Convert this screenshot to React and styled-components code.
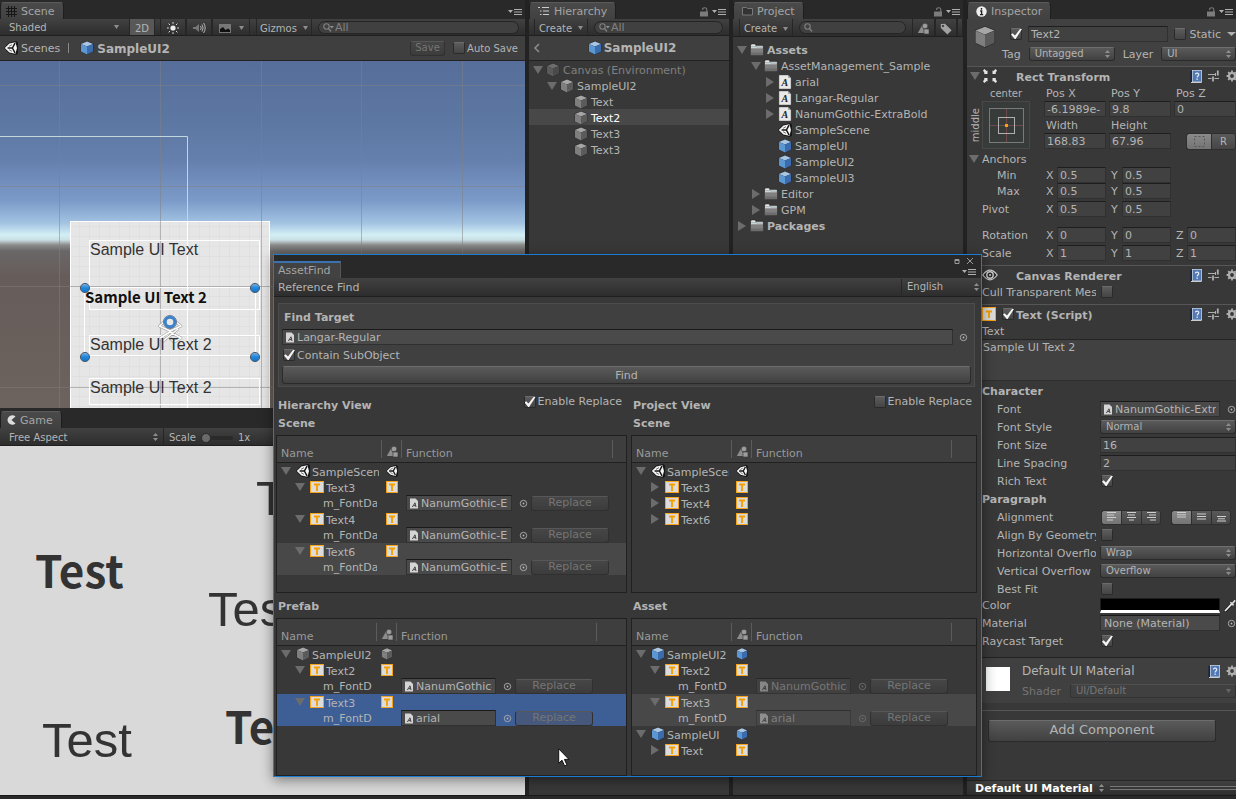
import React from 'react';
import styled, { createGlobalStyle, css } from 'styled-components';

const Global = createGlobalStyle`
  *, *::before, *::after { box-sizing: border-box; }
  body { margin: 0; background: #222; }
  body, button, input, select, textarea {
    font-family: "DejaVu Sans", sans-serif;
    font-size: 11px;
    color: #b4b4b4;
  }
  svg { display: block; flex: none; }
  h2, h3 { margin: 0; font-size: 11px; font-weight: 700; }
`;

/* ---------- icons ---------- */

const Arrow = styled.span`
  flex: none;
  width: 14px;
  display: flex;
  justify-content: center;
  &::before {
    content: '';
    width: ${p => (p.$open ? 10 : 8)}px;
    height: ${p => (p.$open ? 8 : 10)}px;
    background: #6c6c6c;
    clip-path: ${p => (p.$open ? 'polygon(0 0, 100% 0, 50% 100%)' : 'polygon(0 0, 100% 50%, 0 100%)')};
  }
  visibility: ${p => (p.$none ? 'hidden' : 'visible')};
`;

const cubeTones = {
  blue: ['#a9c6e4', '#5b97d2', '#3a6cae'],
  gray: ['#a6a6a6', '#7f7f7f', '#5b5b5b'],
  dim: ['#6d6d6d', '#5a5a5a', '#4a4a4a'],
};
const Cube = ({ tone = 'gray', size = 14 }) => {
  const [a, b, c] = cubeTones[tone];
  return (
    <svg width={size} height={size} viewBox="0 0 14 14">
      <path d="M7 0L13.4 2.6V10.8L7 14L.6 10.8V2.6z" fill="#2b2b2b" />
      <path d="M7 .4L13 2.9L7 5.4L1 2.9z" fill={a} />
      <path d="M1 3.1L7 5.6V13.5L1 10.6z" fill={b} />
      <path d="M13 3.1L7 5.6V13.5L13 10.6z" fill={c} />
    </svg>
  );
};

const UnityLogo = ({ size = 14 }) => (
  <svg width={size} height={size} viewBox="0 0 14 14">
    <path d="M0 7L5 1.8L12 0L14 1.5V12.5L12 14L5 12.2z" fill="#161616" />
    <path d="M.8 7L5.4 2.6L11.4 1.2L13 7L11.4 12.8L5.4 11.4z" fill="#f6f6f6" />
    <path d="M3.6 7H8.4L11 2.2M8.4 7L11 11.8" stroke="#161616" strokeWidth="1.5" fill="none" />
    <path d="M5 5.4L8 3.6M5 8.6L8 10.4" stroke="#161616" strokeWidth=".6" />
  </svg>
);

const Folder = () => (
  <svg width="14" height="14" viewBox="0 0 14 14">
    <path d="M.5 2.5L1.5 1H5L6 2.3H12.5L13.3 3.5V12.5H.5z" fill="#a8a8a8" stroke="#262626" strokeWidth=".6" />
    <path d="M1.5 1.4H5V3.2H1z" fill="#e4e4e4" />
    <path d="M1 4.6H6L7.2 3.9H13" stroke="#c7dde2" fill="none" />
    <path d="M1 5.6H13V12H1z" fill="#808080" />
    <path d="M1 9.5H13V12H1z" fill="#6d6d6d" />
  </svg>
);

const FontFile = () => (
  <svg width="14" height="14" viewBox="0 0 14 14">
    <path d="M1.4 .5H10L12.6 3V13.5H1.4z" fill="#e9e9e9" stroke="#fff" strokeWidth=".5" />
    <path d="M10 .5V3H12.6z" fill="#aaa" />
    <text x="3.4" y="11" fontFamily="Liberation Serif, serif" fontStyle="italic" fontWeight="700" fontSize="10" fill="#222">A</text>
  </svg>
);

const MiniFont = () => (
  <svg width="10" height="11" viewBox="0 0 10 11">
    <path d="M1 .5H6.5L9 3V10.5H1z" fill="#d4d4d4" />
    <path d="M3.4 9L6 4.8L7 9M4.6 7.6H6.6" stroke="#444" strokeWidth="1" fill="none" />
  </svg>
);

const TIcon = ({ w = 14, h = 12 }) => (
  <svg width={w} height={h} viewBox={`0 0 ${w} ${h}`}>
    <rect x=".5" y=".5" width={w - 1} height={h - 1} fill="#dcdcdc" stroke="#f5a21c" />
    <path d={`M${w / 2 - 3} ${h / 2 - 2.5}h6M${w / 2} ${h / 2 - 3}v7`} stroke="#f5a000" strokeWidth="1.9" />
  </svg>
);

const Shapes = () => (
  <svg width="13" height="12" viewBox="0 0 13 12">
    <path d="M5 2.5L8.2 10H.8z" fill="#8c8c8c" />
    <circle cx="8" cy="3" r="2.8" fill="#9c9c9c" stroke="#383838" strokeWidth=".6" />
    <rect x="7" y="6" width="5" height="5" fill="#9c9c9c" stroke="#383838" strokeWidth=".6" />
  </svg>
);

const Tag = () => (
  <svg width="12" height="12" viewBox="0 0 12 12">
    <path d="M.8 1L5 .8L11.6 7.2L7.4 11.4L.8 5z" fill="#a2a2a2" />
    <circle cx="3" cy="3" r="1.1" fill="#333" />
  </svg>
);

const Lock = () => (
  <svg width="9" height="10" viewBox="0 0 9 10">
    <rect x="0" y="4.5" width="8" height="5" fill="#7c7c7c" />
    <path d="M2.6 3V2.4C2.6 .2 6.8 .2 6.8 2.4V5" stroke="#7c7c7c" fill="none" strokeWidth="1.1" />
  </svg>
);

const PaneMenu = () => (
  <svg width="14" height="6" viewBox="0 0 14 6">
    <path d="M0 1H5L2.5 4z" fill="#b0b0b0" />
    <path d="M6 .5H14M6 3H14M6 5.5H14" stroke="#b0b0b0" />
  </svg>
);

const Book = () => (
  <svg width="12" height="13" viewBox="0 0 12 13">
    <path d="M.4 1L2.4 .4V11.4L.4 12.4z" fill="#16243f" />
    <rect x="2.4" y=".5" width="9.2" height="11.4" fill="#5379b5" stroke="#c4d2e6" strokeWidth=".8" />
    <path d="M1 12.5H11.5" stroke="#ccc" />
    <path d="M5.4 4.4C5.6 2.6 9 2.8 8.7 4.8C8.5 6 7.1 6 7.1 7.4M7.1 8.5V9.9" stroke="#e8eef8" strokeWidth="1.2" fill="none" />
  </svg>
);

const Sliders = () => (
  <svg width="12" height="12" viewBox="0 0 12 12" stroke="#aeaeae" fill="none">
    <path d="M0 4.5H7M0 8.5H3.5M6.5 8.5H11" />
    <path d="M5 6.5V11.5M9.8 .5V5.6" strokeWidth="1.8" />
    <path d="M7.5 3V6" />
  </svg>
);

const Gear = () => (
  <svg width="12" height="12" viewBox="0 0 12 12">
    <circle cx="6" cy="6" r="3" fill="none" stroke="#b0b0b0" strokeWidth="2.2" />
    <path d="M6 .6V2.4M6 9.6V11.4M.6 6H2.4M9.6 6H11.4M2.2 2.2L3.4 3.4M8.6 8.6L9.8 9.8M2.2 9.8L3.4 8.6M8.6 3.4L9.8 2.2" stroke="#b0b0b0" strokeWidth="1.8" />
  </svg>
);

const Magnifier = ({ caret }) => (
  <svg width={caret ? 11 : 9} height="9" viewBox={caret ? '0 0 11 9' : '0 0 9 9'}>
    <circle cx="3.5" cy="3.5" r="2.7" fill="none" stroke="#808080" strokeWidth="1.1" />
    <path d="M5.5 5.5L8 8.5" stroke="#808080" strokeWidth="1.3" />
    {caret && <path d="M6.8 3H10.8L8.8 5.4z" fill="#909090" />}
  </svg>
);

const UpDown = () => (
  <svg width="5" height="8" viewBox="0 0 5 8">
    <path d="M0 3L2.5 0L5 3zM0 5L2.5 8L5 5z" fill="#8e8e8e" />
  </svg>
);

const Down = ({ w = 5, color = '#8e8e8e' }) => (
  <svg width={w} height="4" viewBox="0 0 5 4" preserveAspectRatio="none">
    <path d="M0 0H5L2.5 4z" fill={color} />
  </svg>
);

const Picker = ({ faded }) => (
  <svg width="9" height="9" viewBox="0 0 9 9">
    <circle cx="4.5" cy="4.5" r="3.2" fill="none" stroke={faded ? '#6a6a6a' : '#a8a8a8'} />
    <circle cx="4.5" cy="4.5" r=".9" fill={faded ? '#6a6a6a' : '#b8b8b8'} />
  </svg>
);

/* ---------- shared controls ---------- */

const Check = styled.input.attrs({ type: 'checkbox' })`
  appearance: none;
  flex: none;
  width: 12px;
  height: 12px;
  margin: 0;
  border: 1px solid #2a2a2a;
  border-top-color: #6c6c6c;
  border-radius: 2px;
  background: linear-gradient(#5c5c5c, #444);
  display: grid;
  &:checked::before {
    content: '';
    width: 11px;
    height: 10px;
    background: #f4f4f4;
    clip-path: polygon(0 55%, 15% 42%, 36% 66%, 82% 0, 100% 0, 42% 100%, 34% 100%);
  }
`;

const CheckLabel = styled.label`
  display: flex;
  align-items: center;
  gap: 2px;
  white-space: nowrap;
  font-size: ${p => (p.$small ? 10 : 11)}px;
`;

const raised = css`
  border: 1px solid #2b2b2b;
  border-top-color: #6e6e6e;
  border-radius: 3px;
  background: linear-gradient(#5a5a5a, #414141);
`;

const PushButton = styled.button`
  ${raised}
  padding: ${p => (p.$tall ? '0 0 2px' : '1px 0 0')};
  margin-top: ${p => (p.$tall ? 0 : 1)}px;
  width: 100%;
  height: ${p => (p.$tall ? 22 : 18)}px;
  font-size: ${p => (p.$tall ? 13 : 11)}px;
  line-height: 16px;
`;

const MiniButton = styled.button`
  flex: none;
  width: ${p => p.$w}px;
  height: 15px;
  padding: 0;
  border: 1px solid #303030;
  border-top-color: #575757;
  border-radius: 3px;
  background: ${p => (p.$onBlue ? '#46597c' : 'linear-gradient(#464646, #3c3c3c)')};
  color: #757575;
  font-size: ${p => (p.$small ? 10 : 11)}px;
  line-height: 12px;
`;

const SelectBox = styled.span`
  display: grid;
  min-width: 0;
  flex: ${p => (p.$w ? `0 0 ${p.$w}px` : '1 1 0')};
  align-items: center;
  & > select, & > svg { grid-area: 1 / 1; }
  & > svg { justify-self: end; margin-right: 5px; pointer-events: none; }
  & > select {
    appearance: none;
    width: 100%;
    height: ${p => (p.$flat ? 16 : 14)}px;
    padding: ${p => (p.$flat ? '2px 12px 0 9px' : '0 12px 0 5px')};
    font-size: 10px;
    line-height: 12px;
    opacity: 1;
    ${p => (p.$flat ? 'border: 0; border-radius: 0; background: transparent;' : raised)}
    ${p => p.$faded && 'background: #404040; border-color: #333; border-top-color: #505050; color: #777;'}
  }
`;

const Select = ({ label, value, arrow = 'updown', ...rest }) => (
  <SelectBox {...rest}>
    <select aria-label={label} defaultValue={value} disabled={rest.$faded}>
      <option>{value}</option>
    </select>
    {arrow === 'updown' ? <UpDown /> : <Down color={rest.$faded ? '#666' : undefined} />}
  </SelectBox>
);

const Field = styled.input`
  flex: 1 1 0;
  min-width: 0;
  width: 100%;
  height: 16px;
  padding: 0 2px;
  border: 1px solid #303030;
  border-top-color: #1e1e1e;
  background: #414141;
`;

const ObjectBox = styled.span`
  flex: 1 1 0;
  min-width: 0;
  height: 16px;
  display: flex;
  align-items: center;
  gap: 1px;
  padding: 0 2px;
  border: 1px solid #303030;
  border-top-color: #1a1a1a;
  background: #4a4a4a;
  opacity: ${p => (p.$faded ? 0.5 : 1)};
  & > input {
    flex: 1;
    min-width: 0;
    height: 14px;
    border: 0;
    padding: 0 1px;
    background: transparent;
  }
`;

const ObjectInput = ({ label, value, icon = true, faded }) => (
  <ObjectBox $faded={faded}>
    {icon && <MiniFont />}
    <input aria-label={label} defaultValue={value} readOnly />
  </ObjectBox>
);

const PickButton = styled.button`
  flex: none;
  width: ${p => p.$w}px;
  height: 16px;
  padding: 0 0 0 ${p => p.$pad ?? 3}px;
  border: 0;
  background: none;
  display: grid;
  place-items: center;
`;

/* ---------- panes ---------- */

const Desktop = styled.div`
  position: relative;
  min-height: 100vh;
  overflow: hidden;
  display: flex;
  flex-direction: column;
  background: #222;
`;

const Columns = styled.div`
  flex: 1;
  display: grid;
  grid-template-columns: minmax(0, 525fr) minmax(0, 200fr) minmax(0, 230fr) minmax(0, 269fr);
  gap: 4px;
`;

const StatusStrip = styled.footer`
  height: 4px;
  background: #292929;
  border-top: 1px solid #191919;
`;

const Pane = styled.section`
  min-width: 0;
  display: flex;
  flex-direction: column;
  background: #383838;
  overflow: hidden;
  ${p => p.$grow && `flex: ${p.$grow} 1 0;`}
`;

const LeftColumn = styled.div`
  display: flex;
  flex-direction: column;
  min-width: 0;
`;

const TabBar = styled.header`
  flex: none;
  height: ${p => (p.$tall ? 20 : 19)}px;
  display: flex;
  align-items: flex-end;
  justify-content: space-between;
  background: #292929;
`;

const PaneTab = styled.h2`
  height: 17px;
  display: flex;
  align-items: center;
  gap: 4px;
  padding: 0 8px 0 ${p => p.$pad ?? 8}px;
  border: 1px solid #1f1f1f;
  border-top-color: #5a5a5a;
  border-bottom: 0;
  border-radius: 4px 4px 0 0;
  background: linear-gradient(#4a4a4a, #414141);
  font-weight: 400;
  color: #a4a4a4;
`;

const PaneActions = styled.div`
  height: 14px;
  display: flex;
  align-items: center;
  gap: 3px;
  padding-right: 3px;
`;

const Toolbar = styled.div`
  flex: none;
  height: ${p => p.$h || 17}px;
  display: flex;
  align-items: center;
  background: linear-gradient(#414141, #2d2d2d);
  border-bottom: 1px solid #1f1f1f;
  font-size: 10px;
`;

const ToolItem = styled.button`
  height: 100%;
  flex: none;
  width: ${p => p.$w}px;
  margin-left: ${p => p.$ml || 0}px;
  padding: 2px 0 0;
  display: flex;
  align-items: center;
  justify-content: center;
  gap: ${p => p.$gap || 6}px;
  border: 0;
  border-left: 1px solid #262626;
  border-right: 1px solid #262626;
  background: ${p => (p.$on ? '#585858' : 'transparent')};
  font-size: 10px;
`;

const SearchBox = styled.label`
  flex: 1;
  min-width: 0;
  height: 13px;
  margin: 0 6px;
  padding: 0 4px;
  display: flex;
  align-items: center;
  gap: 1px;
  border: 1px solid #242424;
  border-radius: 7px;
  background: #404040;
  & > input {
    min-width: 0;
    flex: 1;
    height: 11px;
    padding: 0;
    border: 0;
    background: transparent;
  }
  & > input::placeholder { color: #808080; opacity: 1; }
`;

const Crumbs = styled.div`
  flex: none;
  height: 25px;
  display: flex;
  align-items: center;
  gap: 3px;
  padding: 0 7px 0 4px;
  background: #3f3f3f;
  border-bottom: 1px solid #222;
  white-space: nowrap;
`;

const CrumbLink = styled.a`
  color: #b4b4b4;
  text-decoration: none;
  font-size: ${p => (p.$current ? 12 : 11)}px;
  line-height: 14px;
  padding-top: 1px;
  font-weight: ${p => (p.$current ? 700 : 400)};
`;

const CrumbRule = styled.span`
  width: 1px;
  height: 10px;
  margin: 0 8px 0 5px;
  background: #8a8a8a;
`;

const CrumbGap = styled.span`
  width: 2px;
`;

const Spacer = styled.span`
  flex: 1;
`;

const BackButton = styled.button`
  width: 24px;
  padding: 0;
  border: 0;
  background: none;
`;

const CenterTitle = styled.h3`
  flex: 1;
  display: flex;
  justify-content: center;
  align-items: center;
  gap: 2px;
  padding-right: 18px;
  font-size: 12px;
`;

/* ---------- tree lists ---------- */

const Tree = styled.ul`
  list-style: none;
  margin: 0;
  padding: ${p => p.$top || 0}px 0 0;
`;

const TreeItem = styled.li`
  height: 16px;
  display: flex;
  align-items: center;
  gap: 1px;
  padding-top: 2px;
  padding-left: ${p => 2 + p.$depth * 14}px;
  white-space: nowrap;
  background: ${p => (p.$active ? '#484848' : 'transparent')};
  color: ${p => (p.$active ? '#fff' : p.$faded ? '#808080' : '#b4b4b4')};
  font-weight: ${p => (p.$bold ? 700 : 400)};
  & > svg { margin-right: 2px; }
`;

const TreeRow = ({ depth, open, leaf, icon, text, ...rest }) => (
  <TreeItem $depth={depth} {...rest}>
    <Arrow $open={open} $none={leaf} />
    {icon}
    {text}
  </TreeItem>
);

/* ---------- scene view ---------- */

const SceneCanvas = styled.div`
  position: relative;
  flex: 1;
  overflow: hidden;
  background: linear-gradient(#566e99 0, #5d77a3 60px, #6680ad 100px, #7c9bc9 140px, #a3c3e2 162px, #d3eff5 174px, #c9dee2 179px, #8b8b8b 184px, #6a6767 190px, #665d5a 215px, #6c625e 100%);
  & > svg { position: absolute; inset: 0; width: 100%; height: 100%; }
`;

const CanvasText = styled.span`
  position: absolute;
  left: ${p => p.$x}px;
  top: ${p => p.$y}px;
  white-space: nowrap;
  line-height: 1;
  font-family: ${p => (p.$bold ? '"Noto Sans CJK KR"' : '"Liberation Sans"')}, sans-serif;
  font-weight: ${p => (p.$bold ? 700 : 400)};
  font-size: ${p => p.$size}px;
  color: ${p => p.$color || '#333'};
`;

const GameCanvas = styled.div`
  position: relative;
  flex: 1;
  overflow: hidden;
  background: #d9d9d9;
`;

const ScaleLabel = styled.label`
  display: flex;
  align-items: center;
  gap: 5px;
  padding: 2px 0 0 5px;
  height: 100%;
  border-left: 1px solid #262626;
`;

const Range = styled.input.attrs({ type: 'range' })`
  appearance: none;
  width: 32px;
  height: 4px;
  margin: 0;
  border-radius: 2px;
  background: #2a2a2a;
  &::-webkit-slider-thumb {
    appearance: none;
    width: 10px;
    height: 10px;
    border-radius: 5px;
    background: #6a6a6a;
    border: 1px solid #2a2a2a;
  }
`;

const steps = n => Array.from({ length: n }, (_, i) => i);

const SceneDrawing = () => (
  <svg aria-hidden="true">
    <defs>
      <pattern id="fine" width="10" height="10" patternUnits="userSpaceOnUse">
        <path d="M9.5 0V10M0 5.5H10" stroke="#e0e0e0" />
      </pattern>
      <linearGradient id="pin" x2="0" y2="1">
        <stop offset="0" stopColor="#7fb2e4" />
        <stop offset=".5" stopColor="#1f86dc" />
        <stop offset="1" stopColor="#1672c4" />
      </linearGradient>
    </defs>
    <rect x="70" y="160" width="200" height="200" fill="#e6e6e6" />
    <rect x="70" y="160" width="200" height="200" fill="url(#fine)" />
    <rect x="70.5" y="160.5" width="199" height="220" fill="none" stroke="#fff" />
    {steps(6).map(i => (
      <path key={`v${i}`} d={`M${Math.floor(59.8 + i * 100.6) + 0.5} 0V360`} stroke="#808080" strokeOpacity=".5" />
    ))}
    {steps(4).map(i => (
      <path key={`h${i}`} d={`M0 ${Math.floor(24.3 + i * 100.8) + 0.5}H2000`} stroke="#808080" strokeOpacity=".5" />
    ))}
    <path d="M0 75.5H187.5V160" fill="none" stroke="#c2d6de" />
    <path d="M187.5 160V360" stroke="#fff" />
    <g fill="none" stroke="#fff">
      <rect x="89.5" y="179.5" width="170" height="69" />
      <rect x="89.5" y="274.5" width="170" height="20" />
      <rect x="89.5" y="317.5" width="170" height="26" />
      <rect x="84.5" y="226.5" width="171" height="68" />
    </g>
    <g fill="none" strokeLinejoin="round">
      <path d="M164 261L159.500 265L170 270L181 265L176 261M160 277L170 271L181 277L174 281L170 277M178 268L162 281" stroke="#9a9a9a" strokeWidth="2.600" />
      <path d="M164 261L159.500 265L170 270L181 265L176 261M160 277L170 271L181 277L174 281L170 277M178 268L162 281" stroke="#fff" strokeWidth="1.600" />
    </g>
    {[[85, 227], [255, 227], [85, 296], [255, 296]].map(([x, y]) => (
      <circle key={`${x}-${y}`} cx={x} cy={y} r="4.6" fill="url(#pin)" stroke="#505a66" />
    ))}
    <circle cx="170" cy="261" r="4.8" fill="#e8e8e8" stroke="#3a82cc" strokeWidth="3" />
    <circle cx="170" cy="261" r="6.6" fill="none" stroke="#55708f" strokeWidth=".8" />
  </svg>
);

const ScenePane = () => (
  <Pane $grow={408}>
    <TabBar>
      <PaneTab $pad={5}>
        <svg width="11" height="11" viewBox="0 0 11 11" stroke="#161616"><path d="M2.5 0V11M5.5 0V11M8.5 0V11M0 2.5H11M0 5.5H11M0 8.5H11" /></svg>
        Scene
      </PaneTab>
      <PaneActions><PaneMenu /></PaneActions>
    </TabBar>
    <Toolbar>
      <Select label="Draw mode" value="Shaded" arrow="down" $flat $w={124} />
      <ToolItem $w={26} $ml={5} $on>2D</ToolItem>
      <ToolItem $w={26} $ml={5} aria-label="Lighting">
        <svg width="12" height="12" viewBox="0 0 12 12"><circle cx="6" cy="6" r="2.6" fill="#eee" /><path d="M6 0V1.8M6 10.2V12M0 6H1.8M10.2 6H12M1.6 1.6L3 3M9 9L10.4 10.4M1.6 10.4L3 9M9 3L10.4 1.6" stroke="#ddd" /></svg>
      </ToolItem>
      <ToolItem $w={26} aria-label="Audio">
        <svg width="13" height="12" viewBox="0 0 13 12"><path d="M0 5H2.5L6 2V10L2.5 7H0z" fill="#777" /><path d="M7.5 4Q9 6 7.5 8M9 2.5Q11.3 6 9 9.5M10.6 1Q13.8 6 10.6 11" stroke="#b4b4b4" fill="none" /></svg>
      </ToolItem>
      <ToolItem $w={38} aria-label="Effects" $gap={8}>
        <svg width="12" height="9" viewBox="0 0 12 9"><rect width="12" height="9" fill="#777" /><path d="M1 8V5L4 3L6.5 6L9 4.5L11 6V8z" fill="#111" /></svg>
        <Down />
      </ToolItem>
      <ToolItem $w={56} $ml={6}>Gizmos <Down /></ToolItem>
      <SearchBox><Magnifier caret /><input aria-label="Search scene" placeholder="All" /></SearchBox>
    </Toolbar>
    <Crumbs>
      <UnityLogo />
      <CrumbLink href="#scenes">Scenes</CrumbLink>
      <CrumbRule />
      <Cube tone="blue" />
      <CrumbLink href="#sampleui2" $current>SampleUI2</CrumbLink>
      <Spacer />
      <MiniButton $w={35} $small>Save</MiniButton>
      <CrumbGap />
      <CheckLabel $small><Check />Auto Save</CheckLabel>
    </Crumbs>
    <SceneCanvas>
      <SceneDrawing />
      <CanvasText $x={90} $y={181} $size={16}>Sample UI Text</CanvasText>
      <CanvasText $x={85} $y={228} $size={15} $bold $color="#111">Sample UI Text 2</CanvasText>
      <CanvasText $x={90} $y={276} $size={16}>Sample UI Text 2</CanvasText>
      <CanvasText $x={90} $y={319} $size={16}>Sample UI Text 2</CanvasText>
    </SceneCanvas>
  </Pane>
);

const GamePane = () => (
  <Pane $grow={387}>
    <TabBar $tall>
      <PaneTab $pad={6}>
        <svg width="9" height="10" viewBox="0 0 9 10"><path d="M8.5 1.4A4.8 4.8 0 1 0 8.5 8.6L4.5 5z" fill="#ddd" /></svg>
        Game
      </PaneTab>
    </TabBar>
    <Toolbar $h={18}>
      <Select label="Aspect" value="Free Aspect" $flat $w={163} />
      <ScaleLabel>Scale <Range defaultValue={0} /> 1x</ScaleLabel>
    </Toolbar>
    <GameCanvas>
      <CanvasText $x={35} $y={101} $size={44} $bold>Test</CanvasText>
      <CanvasText $x={256} $y={28} $size={49}>Test</CanvasText>
      <CanvasText $x={208} $y={139} $size={49}>Test</CanvasText>
      <CanvasText $x={42} $y={270} $size={49}>Test</CanvasText>
      <CanvasText $x={225} $y={257} $size={44} $bold>Test</CanvasText>
    </GameCanvas>
  </Pane>
);

/* ---------- hierarchy and project ---------- */

const HierarchyPane = () => (
  <Pane>
    <TabBar>
      <PaneTab>
        <svg width="12" height="9" viewBox="0 0 12 9" stroke="#ccc"><path d="M0 .5H2M4 .5H11M2 4H3.5M5 4H11M2 7.5H3.5M5 7.5H11" /></svg>
        Hierarchy
      </PaneTab>
      <PaneActions><Lock /><PaneMenu /></PaneActions>
    </TabBar>
    <Toolbar>
      <ToolItem $w={54} $ml={5}>Create <Down /></ToolItem>
      <SearchBox><Magnifier caret /><input aria-label="Search hierarchy" placeholder="All" /></SearchBox>
    </Toolbar>
    <Crumbs>
      <BackButton aria-label="Back">
        <svg width="8" height="10" viewBox="0 0 8 10"><path d="M6 1L2 5L6 9" fill="none" stroke="#8e8e8e" strokeWidth="1.5" /></svg>
      </BackButton>
      <CenterTitle><Cube tone="blue" />SampleUI2</CenterTitle>
    </Crumbs>
    <Tree>
      <TreeRow depth={0} open icon={<Cube tone="dim" />} text="Canvas (Environment)" $faded />
      <TreeRow depth={1} open icon={<Cube />} text="SampleUI2" />
      <TreeRow depth={2} leaf icon={<Cube />} text="Text" />
      <TreeRow depth={2} leaf icon={<Cube />} text="Text2" $active />
      <TreeRow depth={2} leaf icon={<Cube />} text="Text3" />
      <TreeRow depth={2} leaf icon={<Cube />} text="Text3" />
    </Tree>
  </Pane>
);

const ProjectPane = () => (
  <Pane>
    <TabBar>
      <PaneTab>
        <svg width="11" height="10" viewBox="0 0 11 10"><path d="M.5 1.5H4.5L5.5 2.5H10.5V9H.5z" fill="#333" stroke="#777" /></svg>
        Project
      </PaneTab>
      <PaneActions><Lock /><PaneMenu /></PaneActions>
    </TabBar>
    <Toolbar $h={18}>
      <ToolItem $w={54} $ml={6}>Create <Down /></ToolItem>
      <SearchBox><Magnifier /><input aria-label="Search project" /></SearchBox>
      <ToolItem $w={23} aria-label="Search by type"><Shapes /></ToolItem>
      <ToolItem $w={22} aria-label="Search by label"><Tag /></ToolItem>
      <ToolItem $w={6} aria-label="More" />
    </Toolbar>
    <Tree $top={4}>
      <TreeRow depth={0} open icon={<Folder />} text="Assets" $bold />
      <TreeRow depth={1} open icon={<Folder />} text="AssetManagement_Sample" />
      <TreeRow depth={2} icon={<FontFile />} text="arial" />
      <TreeRow depth={2} icon={<FontFile />} text="Langar-Regular" />
      <TreeRow depth={2} icon={<FontFile />} text="NanumGothic-ExtraBold" />
      <TreeRow depth={2} leaf icon={<UnityLogo />} text="SampleScene" />
      <TreeRow depth={2} leaf icon={<Cube tone="blue" />} text="SampleUI" />
      <TreeRow depth={2} leaf icon={<Cube tone="blue" />} text="SampleUI2" />
      <TreeRow depth={2} leaf icon={<Cube tone="blue" />} text="SampleUI3" />
      <TreeRow depth={1} icon={<Folder />} text="Editor" />
      <TreeRow depth={1} icon={<Folder />} text="GPM" />
      <TreeRow depth={0} icon={<Folder />} text="Packages" $bold />
    </Tree>
  </Pane>
);

/* ---------- inspector ---------- */

const ObjectHeader = styled.div`
  height: 47px;
  flex: none;
  display: flex;
  gap: 14px;
  padding: 7px 0 0 7px;
  background: #414141;
`;

const HeaderLines = styled.div`
  flex: 1;
  min-width: 0;
  display: flex;
  flex-direction: column;
  gap: 4px;
`;

const HeaderLine = styled.div`
  height: 16px;
  display: flex;
  align-items: center;
  gap: 6px;
  & > label { white-space: nowrap; }
`;

const StaticLabel = styled(CheckLabel)`
  gap: 4px;
`;

const TagLine = styled(HeaderLine)`
  margin-left: -8px;
  gap: 8px;
`;

const Section = styled.div`
  flex: none;
  border-top: 1px solid #565656;
  padding: 0 0 ${p => p.$bottom ?? 4}px 15px;
`;

const SectionTitle = styled.div`
  height: 18px;
  margin-left: -14px;
  display: flex;
  align-items: center;
  gap: 2px;
  & > h3 { flex: 1; white-space: nowrap; padding-top: 2px; }
`;

const TitleIcons = styled.span`
  width: ${p => (p.$narrow ? 32 : 46)}px;
  flex: none;
  display: flex;
  align-items: center;
`;

const TitleTools = styled.span`
  width: ${p => (p.$short ? 28 : 46)}px;
  flex: none;
  display: flex;
  gap: 6px;
  overflow: hidden;
`;

const RectGrid = styled.div`
  display: grid;
  grid-template-columns: 59px repeat(3, minmax(0, 1fr));
  grid-auto-rows: 16px;
  column-gap: 3px;
  align-items: center;
  & > label, & > span { padding-left: 2px; }
`;

const AnchorCell = styled.div`
  grid-row: 1 / span 4;
  grid-column: 1;
  align-self: start;
  display: grid;
  grid-template-columns: 14px 48px;
  grid-template-rows: 16px 48px;
  justify-items: center;
  align-items: center;
  margin-left: -14px;
  font-size: 10px;
  & > span { grid-column: 2; }
  & > em {
    grid-row: 2;
    font-style: normal;
    writing-mode: vertical-rl;
    rotate: 180deg;
  }
`;

const AxisLine = styled.div`
  display: grid;
  grid-template-columns: 59px repeat(3, minmax(0, 1fr));
  column-gap: 3px;
  height: 16px;
  align-items: center;
  margin-top: ${p => p.$gap || 0}px;
  & > span { padding-left: ${p => (p.$indent ? 15 : 0)}px; }
`;

const Axis = styled.label`
  display: flex;
  align-items: center;
  padding-left: 2px;
  & > span { width: 11px; flex: none; }
`;

const AxisRow = ({ name, values, ...rest }) => (
  <AxisLine {...rest}>
    <span>{name}</span>
    {values.map((v, i) => (
      <Axis key={i}><span>{'XYZ'[i]}</span><Field defaultValue={v} /></Axis>
    ))}
  </AxisLine>
);

const Foldout = styled.div`
  display: flex;
  align-items: center;
  height: 16px;
  margin: 2px 0 0 -15px;
  gap: 1px;
`;

const Segments = styled.span`
  display: flex;
  margin-right: ${p => p.$mr || 0}px;
`;

const Segment = styled.button`
  width: ${p => p.$w || 20}px;
  height: ${p => (p.$w ? 17 : 15)}px;
  padding: 0;
  display: grid;
  place-items: center;
  border: 1px solid #2e2e2e;
  border-right-width: ${p => (p.$last ? 1 : 0)}px;
  border-radius: ${p => (p.$first ? '3px 0 0 3px' : p.$last ? '0 3px 3px 0' : '0')};
  background: ${p => (p.$on ? 'linear-gradient(#8a8a8a, #747474)' : 'linear-gradient(#5a5a5a, #464646)')};
  font-size: 10px;
`;

const Prop = styled.div`
  display: grid;
  grid-template-columns: 118px minmax(0, 1fr);
  height: 16px;
  align-items: center;
  margin-top: ${p => p.$gap ?? 2}px;
  & > :first-child {
    padding-left: ${p => (p.$indent ? 15 : 0)}px;
    margin-right: 4px;
    white-space: nowrap;
    overflow: hidden;
  }
`;

const PropValue = styled.div`
  display: flex;
  align-items: center;
  min-width: 0;
  padding-left: ${p => p.$pad || 0}px;
`;

const GroupTitle = styled.h3`
  height: 16px;
  line-height: 18px;
  margin-top: 2px;
`;

const TextArea = styled.textarea`
  display: block;
  width: 100%;
  height: 42px;
  padding: 0 1px;
  border: 0;
  border-top: 1px solid #242424;
  border-bottom: 1px solid #2e2e2e;
  background: #414141;
  resize: none;
  line-height: 16px;
`;

const ColorSwatch = styled.button`
  flex: 1;
  height: 15px;
  padding: 0;
  border: 1px solid #1e1e1e;
  background: #000;
  border-bottom: 3px solid #fff;
`;

const MaterialHeader = styled.div`
  flex: none;
  height: 46px;
  display: flex;
  gap: 12px;
  padding: 3px 0 0 19px;
  border-top: 1px solid #222;
  background: #404040;
`;

const Swatch = styled.span`
  width: 24px;
  height: 24px;
  margin-top: 6px;
  flex: none;
  background: linear-gradient(90deg, #f4f8f6, #fff 50%);
`;

const MaterialLines = styled.div`
  flex: 1;
  min-width: 0;
  display: flex;
  flex-direction: column;
`;

const MaterialLine = styled.div`
  height: 20px;
  display: flex;
  align-items: center;
  gap: 9px;
  color: ${p => (p.$faded ? '#757575' : '#b4b4b4')};
  font-size: ${p => (p.$faded ? 11 : 12)}px;
  & > span:first-child { flex: ${p => (p.$faded ? 'none' : 1)}; white-space: nowrap; }
`;

const AddArea = styled.div`
  margin-top: 7px;
  padding: 9px 20px 0 21px;
  border-top: 1px solid #565656;
`;

const PreviewBar = styled.div`
  height: 15px;
  flex: none;
  margin-top: auto;
  display: flex;
  align-items: center;
  gap: 6px;
  padding-left: 8px;
  background: linear-gradient(#414141, #2d2d2d);
  border-top: 1px solid #262626;
  & > strong { font-size: 11px; color: #fff; white-space: nowrap; }
  &::after {
    content: '';
    flex: 1;
    height: 4px;
    border: solid #777;
    border-width: 1px 0;
  }
`;

const Tools = ({ short }) => (
  <TitleTools $short={short}>
    <Book />
    {!short && <Sliders />}
    <Gear />
  </TitleTools>
);

const alignPaths = {
  left: 'M0 .5H9M0 3H7M0 5.5H9M0 8H6',
  center: 'M0 .5H9M1 3H8M0 5.5H9M2 8H7',
  right: 'M0 .5H9M2 3H9M0 5.5H9M3 8H9',
  top: 'M0 .5H9M0 2.8H9M0 5H9',
  middle: 'M0 2H9M0 4.5H9M0 7H9',
  bottom: 'M0 4.5H9M1 6.8H8M0 9H9',
};
const AlignIcon = ({ kind }) => (
  <svg width="9" height="10" viewBox="0 0 9 10"><path d={alignPaths[kind]} stroke="#d0d0d0" /></svg>
);

const InspectorPane = () => (
  <Pane>
    <TabBar>
      <PaneTab>
        <svg width="11" height="11" viewBox="0 0 11 11"><circle cx="5.5" cy="5.5" r="5.2" fill="#eee" /><path d="M5.5 2V3.7M4.2 5H5.6V8.4M4 8.6H7.2" stroke="#222" strokeWidth="1.4" fill="none" /></svg>
        Inspector
      </PaneTab>
      <PaneActions><Lock /><PaneMenu /></PaneActions>
    </TabBar>
    <ObjectHeader>
      <Cube size={22} />
      <HeaderLines>
        <HeaderLine>
          <Check defaultChecked aria-label="Active" />
          <Field defaultValue="Text2" aria-label="Name" />
          <StaticLabel><Check />Static</StaticLabel>
          <Down w={9} color="#b0b0b0" />
        </HeaderLine>
        <TagLine>
          <span>Tag</span>
          <Select label="Tag" value="Untagged" $w={86} />
          <span>Layer</span>
          <Select label="Layer" value="UI" />
        </TagLine>
      </HeaderLines>
    </ObjectHeader>

    <Section>
      <SectionTitle>
        <TitleIcons>
          <Arrow $open />
          <svg width="16" height="14" viewBox="0 0 16 14" fill="#e4e4e4"><path d="M1 1.5L2.500 0L4.5 2L5.500 1.5V5H2L2.500 4zM15 1.5L13.5 0L11.5 2L10.5 1.5V5H14L13.5 4zM1 12.5L2.5 14L4.5 12L5.5 12.5V9H2L2.5 10zM15 12.5L13.5 14L11.5 12L10.5 12.5V9H14L13.5 10z" /></svg>
        </TitleIcons>
        <h3>Rect Transform</h3>
        <Tools />
      </SectionTitle>
      <RectGrid>
        <AnchorCell>
          <span>center</span>
          <em>middle</em>
          <svg width="48" height="48" viewBox="0 0 48 48">
            <rect x=".5" y=".5" width="47" height="47" fill="#373b3a" stroke="#484848" />
            <rect x="7.5" y="7.5" width="34" height="34" fill="none" stroke="#7a7a7a" />
            <path d="M24.5 8V41M8 24.5H41" stroke="#6e4a4c" />
            <rect x="16.5" y="16.5" width="16" height="16" fill="none" stroke="#b0b0b0" />
            <rect x="23" y="23" width="3" height="3" fill="#ffa000" />
          </svg>
        </AnchorCell>
        <label htmlFor="posx">Pos X</label>
        <label htmlFor="posy">Pos Y</label>
        <label htmlFor="posz">Pos Z</label>
        <Field id="posx" defaultValue="-6.1989e-" />
        <Field id="posy" defaultValue="9.8" />
        <Field id="posz" defaultValue="0" />
        <label htmlFor="width">Width</label>
        <label htmlFor="height">Height</label>
        <span />
        <Field id="width" defaultValue="168.83" />
        <Field id="height" defaultValue="67.96" />
        <Segments>
          <Spacer />
          <Segment $w={25} $on $first aria-label="Blueprint mode">
            <svg width="11" height="11" viewBox="0 0 11 11"><rect x=".5" y=".5" width="10" height="10" fill="none" stroke="#555" strokeDasharray="2 2" /></svg>
          </Segment>
          <Segment $w={25} $last>R</Segment>
        </Segments>
      </RectGrid>
      <Foldout><Arrow $open />Anchors</Foldout>
      <AxisRow name="Min" values={['0.5', '0.5']} $indent />
      <AxisRow name="Max" values={['0.5', '0.5']} $indent />
      <AxisRow name="Pivot" values={['0.5', '0.5']} $gap={2} />
      <AxisRow name="Rotation" values={['0', '0', '0']} $gap={10} />
      <AxisRow name="Scale" values={['1', '1', '1']} $gap={2} />
    </Section>

    <Section>
      <SectionTitle>
        <TitleIcons>
          <Arrow $none />
          <svg width="16" height="14" viewBox="0 0 16 14"><path d="M.8 7Q8 -2.6 15.2 7Q8 16.6 .8 7z" fill="#2c2c2c" stroke="#ccc" strokeWidth="1.2" /><circle cx="8" cy="7" r="3.2" fill="none" stroke="#ccc" strokeWidth="1.4" /><circle cx="8" cy="7" r="1" fill="#ccc" /></svg>
        </TitleIcons>
        <h3>Canvas Renderer</h3>
        <Tools />
      </SectionTitle>
      <Prop $gap={0}>
        <label htmlFor="cull">Cull Transparent Mesh</label>
        <PropValue $pad={1}><Check id="cull" /></PropValue>
      </Prop>
    </Section>

    <Section $bottom={8}>
      <SectionTitle>
        <TitleIcons $narrow>
          <Arrow $none />
          <TIcon w={14} h={14} />
        </TitleIcons>
        <Check defaultChecked aria-label="Enable Text" />
        <h3>Text (Script)</h3>
        <Tools />
      </SectionTitle>
      <Prop $gap={0}><label htmlFor="content">Text</label></Prop>
      <TextArea id="content" defaultValue="Sample UI Text 2" />
      <GroupTitle>Character</GroupTitle>
      <Prop $indent>
        <span>Font</span>
        <PropValue>
          <ObjectInput label="Font" value="NanumGothic-ExtraBold" />
          <PickButton $w={16} $pad={6} aria-label="Pick font"><Picker /></PickButton>
        </PropValue>
      </Prop>
      <Prop $indent><span>Font Style</span><PropValue><Select label="Font Style" value="Normal" /></PropValue></Prop>
      <Prop $indent><label htmlFor="fsize">Font Size</label><Field id="fsize" defaultValue="16" /></Prop>
      <Prop $indent><label htmlFor="lspace">Line Spacing</label><Field id="lspace" defaultValue="2" /></Prop>
      <Prop $indent><label htmlFor="rich">Rich Text</label><PropValue $pad={1}><Check id="rich" defaultChecked /></PropValue></Prop>
      <GroupTitle>Paragraph</GroupTitle>
      <Prop $indent>
        <span>Alignment</span>
        <PropValue $pad={1}>
          <Segments $mr={10}>
            <Segment $on $first aria-label="Left"><AlignIcon kind="left" /></Segment>
            <Segment aria-label="Center"><AlignIcon kind="center" /></Segment>
            <Segment $last aria-label="Right"><AlignIcon kind="right" /></Segment>
          </Segments>
          <Segments>
            <Segment $on $first aria-label="Top"><AlignIcon kind="top" /></Segment>
            <Segment aria-label="Middle"><AlignIcon kind="middle" /></Segment>
            <Segment $last aria-label="Bottom"><AlignIcon kind="bottom" /></Segment>
          </Segments>
        </PropValue>
      </Prop>
      <Prop $indent><label htmlFor="geo">Align By Geometry</label><PropValue $pad={1}><Check id="geo" /></PropValue></Prop>
      <Prop $indent><span>Horizontal Overflow</span><PropValue><Select label="Horizontal Overflow" value="Wrap" /></PropValue></Prop>
      <Prop $indent><span>Vertical Overflow</span><PropValue><Select label="Vertical Overflow" value="Overflow" /></PropValue></Prop>
      <Prop $indent><label htmlFor="best">Best Fit</label><PropValue $pad={1}><Check id="best" /></PropValue></Prop>
      <Prop $gap={0}>
        <span>Color</span>
        <PropValue>
          <ColorSwatch aria-label="Color" />
          <PickButton $w={16} aria-label="Pick colour">
            <svg width="12" height="13" viewBox="0 0 12 13"><path d="M.8 12.4L8 4.8" stroke="#161616" strokeWidth="3" /><path d="M1 12L8 4.6" stroke="#eee" strokeWidth="1.8" /><path d="M6.4 3.2L9.6 6.4M8.6 4.2L11.2 1.4" stroke="#ddd" strokeWidth="1.6" /></svg>
          </PickButton>
        </PropValue>
      </Prop>
      <Prop>
        <span>Material</span>
        <PropValue>
          <ObjectInput label="Material" value="None (Material)" icon={false} />
          <PickButton $w={16} $pad={6} aria-label="Pick material"><Picker /></PickButton>
        </PropValue>
      </Prop>
      <Prop><label htmlFor="ray">Raycast Target</label><PropValue $pad={1}><Check id="ray" defaultChecked /></PropValue></Prop>
    </Section>

    <MaterialHeader>
      <Swatch />
      <MaterialLines>
        <MaterialLine><span>Default UI Material</span><Tools short /></MaterialLine>
        <MaterialLine $faded>
          <span>Shader</span>
          <Select label="Shader" value="UI/Default" arrow="down" $faded />
        </MaterialLine>
      </MaterialLines>
    </MaterialHeader>
    <AddArea><PushButton $tall>Add Component</PushButton></AddArea>
    <PreviewBar><strong>Default UI Material</strong><UpDown /></PreviewBar>
  </Pane>
);

/* ---------- AssetFind window ---------- */

const Window = styled.section`
  position: absolute;
  left: 273px;
  top: 254px;
  width: 709px;
  display: flex;
  flex-direction: column;
  border: 1px solid #1b7cd0;
  background: #383838;
  box-shadow: 0 3px 12px rgba(0, 0, 0, 0.45);
`;

const WindowBar = styled.header`
  height: 23px;
  display: flex;
  align-items: flex-end;
  justify-content: space-between;
  background: #292929;
`;

const WindowTab = styled.h2`
  height: 17px;
  line-height: 15px;
  padding: 0 9px 0 4px;
  border-top: 2px solid #3a72b0;
  border-right: 1px solid #555;
  background: #424242;
  font-weight: 400;
  color: #a4a4a4;
`;

const WindowActions = styled.div`
  height: 23px;
  display: flex;
  flex-direction: column;
  align-items: flex-end;
  gap: 4px;
  padding: 2px 5px 0 0;
`;

const WindowToolbar = styled(Toolbar)`
  justify-content: space-between;
  padding-left: 4px;
  font-size: 11px;
`;

const LanguageBox = styled.span`
  display: flex;
  width: 80px;
  border-left: 1px solid #262626;
  & select { padding-left: 5px; padding-top: 0; }
  & svg { margin-right: 2px; }
`;

const WindowBody = styled.div`
  padding: 6px 4px 0 2px;
`;

const FindBox = styled.div`
  margin: 0 2px;
  padding: 5px 3px 2px;
  display: flex;
  flex-direction: column;
  gap: 2px;
  border: 1px solid #4c4c4c;
  background: #404040;
`;

const FindLine = styled.div`
  height: 16px;
  display: flex;
  align-items: center;
  padding-left: ${p => p.$pad || 0}px;
`;

const FindTitle = styled.h3`
  height: 18px;
  line-height: 17px;
  padding-left: 2px;
`;

const Views = styled.div`
  display: grid;
  grid-template-columns: minmax(0, 351fr) minmax(0, 346fr);
  column-gap: 4px;
  padding-top: 9px;
`;

const ViewTitle = styled.div`
  height: ${p => (p.$last ? 21 : 18)}px;
  display: flex;
  justify-content: space-between;
  align-items: flex-start;
  padding: 0 5px 0 2px;
  & > h3 { line-height: 20px; }
  & > label { line-height: 12px; }
`;

const TableFrame = styled.div`
  height: 158px;
  margin-bottom: ${p => (p.$last ? 0 : 4)}px;
  border: 1px solid #202020;
`;

const Results = styled.table`
  width: 100%;
  table-layout: fixed;
  border-collapse: separate;
  border-spacing: 0;
  th {
    height: 27px;
    padding: 0;
    text-align: left;
    font-weight: 400;
    color: #999;
    background: #3e3e3e;
    border-bottom: 1px solid #202020;
  }
  td { height: 16px; padding: 0; overflow: hidden; }
`;

const HeadCell = styled.div`
  height: 18px;
  display: flex;
  align-items: flex-end;
  padding-left: 4px;
  border-right: 1px solid #5c5c5c;
  line-height: 9px;
`;

const ResultRow = styled.tr`
  background: ${p => (p.$tone === 'blue' ? '#3e5f96' : p.$tone === 'lit' ? '#484848' : 'transparent')};
`;

const NameCell = styled.div`
  height: 16px;
  display: flex;
  align-items: center;
  gap: 1px;
  padding-left: ${p => p.$pad}px;
  margin-right: ${p => p.$clip ?? 3}px;
  overflow: hidden;
  white-space: nowrap;
  & > svg { margin: 0 1px 0 2px; }
`;

const NameText = styled.span`
  height: 16px;
  padding-top: 3px;
  line-height: 13px;
  overflow: hidden;
`;

const FunctionCell = styled.div`
  display: flex;
  align-items: center;
  height: 16px;
  padding: 0 3px 0 4px;
  & > button + button { margin-right: 1px; }
`;

const icons = {
  scene: <UnityLogo />,
  blue: <Cube tone="blue" />,
  gray: <Cube />,
  text: <TIcon />,
};
const smallIcons = {
  scene: <UnityLogo size={12} />,
  blue: <Cube tone="blue" size={12} />,
  gray: <Cube size={12} />,
  text: <TIcon w={12} h={12} />,
};

const ResultTable = ({ cols, rows, faded, last }) => (
  <TableFrame $last={last}>
    <Results>
      <colgroup>
        {cols.map((w, i) => <col key={i} width={w} />)}
        <col />
      </colgroup>
      <thead>
        <tr>
          <th><HeadCell>Name</HeadCell></th>
          <th><HeadCell><Shapes /></HeadCell></th>
          <th><HeadCell>Function</HeadCell></th>
          <th aria-label="Spare" />
        </tr>
      </thead>
      <tbody>
        {rows.map((r, i) => (
          <React.Fragment key={i}>
            <ResultRow $tone={r.tone}>
              <td>
                <NameCell $pad={r.type === 'text' ? 16 : 2}>
                  <Arrow $open={r.open !== false} />
                  {icons[r.type]}
                  <NameText>{r.name}</NameText>
                </NameCell>
              </td>
              <td><NameCell $pad={2}>{smallIcons[r.type]}</NameCell></td>
              <td />
              <td />
            </ResultRow>
            {r.asset && (
              <ResultRow $tone={r.tone}>
                <td><NameCell $pad={46} $clip={5}>m_FontData</NameCell></td>
                <td />
                <td>
                  <FunctionCell>
                    <ObjectInput label={`${r.name} font`} value={r.asset} faded={faded} />
                    <PickButton $w={19} aria-label="Pick asset"><Picker faded={faded} /></PickButton>
                    <MiniButton $w={78} $onBlue={r.tone === 'blue'}>Replace</MiniButton>
                  </FunctionCell>
                </td>
                <td />
              </ResultRow>
            )}
          </React.Fragment>
        ))}
      </tbody>
    </Results>
  </TableFrame>
);

const NANUM = 'NanumGothic-ExtraBold';

const AssetFindWindow = () => (
  <Window>
    <WindowBar>
      <WindowTab>AssetFind</WindowTab>
      <WindowActions>
        <svg width="22" height="8" viewBox="0 0 22 8" stroke="#999" fill="none"><path d="M1 2.5H5V6.5H1zM1 3.5H5M13 1L19 7M19 1L13 7" /></svg>
        <PaneMenu />
      </WindowActions>
    </WindowBar>
    <WindowToolbar $h={19}>
      Reference Find
      <LanguageBox><Select label="Language" value="English" $flat /></LanguageBox>
    </WindowToolbar>
    <WindowBody>
      <FindBox>
        <FindTitle>Find Target</FindTitle>
        <FindLine>
          <ObjectInput label="Find Target" value="Langar-Regular" />
          <PickButton $w={18} aria-label="Pick target"><Picker /></PickButton>
        </FindLine>
        <FindLine $pad={1}><CheckLabel><Check defaultChecked />Contain SubObject</CheckLabel></FindLine>
        <PushButton>Find</PushButton>
      </FindBox>
      <Views>
        <div>
          <ViewTitle>
            <h3>Hierarchy View</h3>
            <CheckLabel><Check defaultChecked />Enable Replace</CheckLabel>
          </ViewTitle>
          <ViewTitle $last><h3>Scene</h3></ViewTitle>
          <ResultTable
            cols={[105, 20, 211]}
            rows={[
              { type: 'scene', name: 'SampleScene' },
              { type: 'text', name: 'Text3', asset: NANUM },
              { type: 'text', name: 'Text4', asset: NANUM },
              { type: 'text', name: 'Text6', asset: NANUM, tone: 'lit' },
            ]}
          />
          <ViewTitle $last><h3>Prefab</h3></ViewTitle>
          <ResultTable
            last
            cols={[100, 20, 200]}
            rows={[
              { type: 'gray', name: 'SampleUI2' },
              { type: 'text', name: 'Text2', asset: NANUM },
              { type: 'text', name: 'Text3', asset: 'arial', tone: 'blue' },
            ]}
          />
        </div>
        <div>
          <ViewTitle>
            <h3>Project View</h3>
            <CheckLabel><Check />Enable Replace</CheckLabel>
          </ViewTitle>
          <ViewTitle $last><h3>Scene</h3></ViewTitle>
          <ResultTable
            cols={[100, 20, 200]}
            rows={[
              { type: 'scene', name: 'SampleScene' },
              { type: 'text', name: 'Text3', open: false },
              { type: 'text', name: 'Text4', open: false },
              { type: 'text', name: 'Text6', open: false },
            ]}
          />
          <ViewTitle $last><h3>Asset</h3></ViewTitle>
          <ResultTable
            last
            faded
            cols={[100, 20, 200]}
            rows={[
              { type: 'blue', name: 'SampleUI2' },
              { type: 'text', name: 'Text2', asset: NANUM },
              { type: 'text', name: 'Text3', asset: 'arial', tone: 'lit' },
              { type: 'blue', name: 'SampleUI' },
              { type: 'text', name: 'Text', open: false },
            ]}
          />
        </div>
      </Views>
    </WindowBody>
  </Window>
);

const Pointer = styled.svg`
  position: absolute;
  left: 558px;
  top: 748px;
`;

export default function App() {
  return (
    <Desktop>
      <Global />
      <Columns>
        <LeftColumn>
          <ScenePane />
          <GamePane />
        </LeftColumn>
        <HierarchyPane />
        <ProjectPane />
        <InspectorPane />
      </Columns>
      <StatusStrip />
      <AssetFindWindow />
      <Pointer width="12" height="19" viewBox="0 0 12 19" aria-hidden="true">
        <path d="M.7 .8V15.2L4 12.2L6.6 18L9 17L6.4 11.4H11z" fill="#fff" stroke="#111" />
      </Pointer>
    </Desktop>
  );
}
